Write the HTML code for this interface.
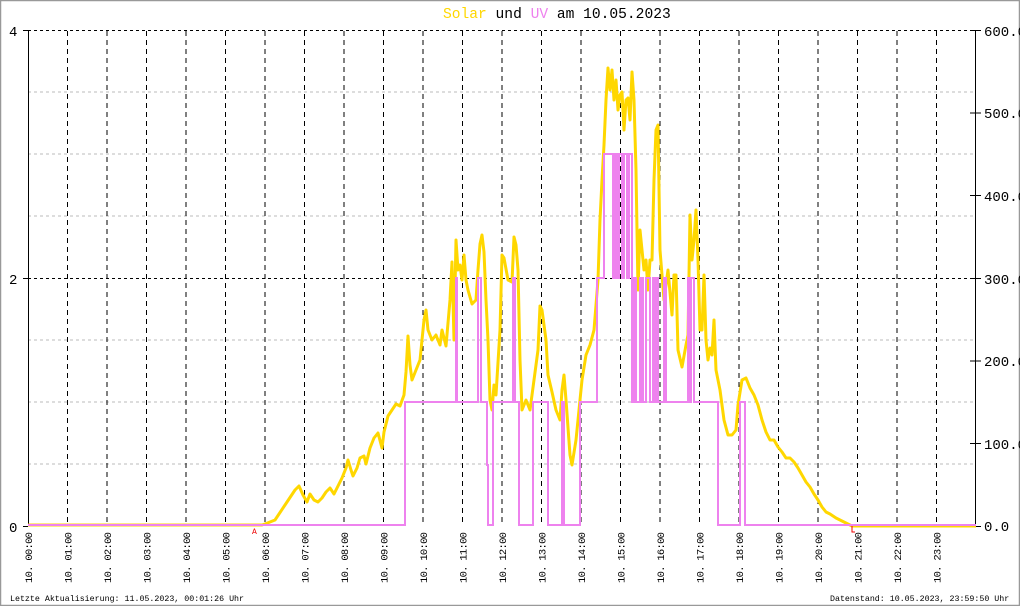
<!DOCTYPE html>
<html><head><meta charset="utf-8"><style>
html,body{margin:0;padding:0;background:#fff;}
svg{display:block;}
text{font-family:"Liberation Mono","DejaVu Sans Mono",monospace;}
</style></head><body>
<svg width="1020" height="606" viewBox="0 0 1020 606" xmlns="http://www.w3.org/2000/svg">
<rect x="0.5" y="0.5" width="1019" height="605" fill="#fff" stroke="#999" stroke-width="1.5"/>
<text x="443" y="18" font-size="14.6" fill="#000"><tspan fill="#ffd700">Solar</tspan> und <tspan fill="#ee82ee">UV</tspan> am 10.05.2023</text>
<g stroke="#bbb" stroke-width="1" stroke-dasharray="3,3">
<line x1="28" y1="92" x2="976" y2="92"/><line x1="28" y1="154" x2="976" y2="154"/><line x1="28" y1="216" x2="976" y2="216"/>
<line x1="28" y1="340" x2="976" y2="340"/><line x1="28" y1="402" x2="976" y2="402"/><line x1="28" y1="464" x2="976" y2="464"/>
</g>
<g stroke="#000" stroke-width="1" stroke-dasharray="3,3">
<line x1="28" y1="30.5" x2="976" y2="30.5"/><line x1="28" y1="278.5" x2="976" y2="278.5"/>
</g>
<g stroke="#000" stroke-width="1" stroke-dasharray="5,4">
<line x1="67.5" y1="31" x2="67.5" y2="526"/><line x1="107" y1="31" x2="107" y2="526"/><line x1="146.5" y1="31" x2="146.5" y2="526"/>
<line x1="186" y1="31" x2="186" y2="526"/><line x1="225.5" y1="31" x2="225.5" y2="526"/><line x1="265" y1="31" x2="265" y2="526"/>
<line x1="304.5" y1="31" x2="304.5" y2="526"/><line x1="344" y1="31" x2="344" y2="526"/><line x1="383.5" y1="31" x2="383.5" y2="526"/>
<line x1="423" y1="31" x2="423" y2="526"/><line x1="462.5" y1="31" x2="462.5" y2="526"/><line x1="502" y1="31" x2="502" y2="526"/>
<line x1="541.5" y1="31" x2="541.5" y2="526"/><line x1="581" y1="31" x2="581" y2="526"/><line x1="620.5" y1="31" x2="620.5" y2="526"/>
<line x1="660" y1="31" x2="660" y2="526"/><line x1="699.5" y1="31" x2="699.5" y2="526"/><line x1="739" y1="31" x2="739" y2="526"/>
<line x1="778.5" y1="31" x2="778.5" y2="526"/><line x1="818" y1="31" x2="818" y2="526"/><line x1="857.5" y1="31" x2="857.5" y2="526"/>
<line x1="897" y1="31" x2="897" y2="526"/><line x1="936.5" y1="31" x2="936.5" y2="526"/>
</g>
<g stroke="#000" stroke-width="1">
<line x1="28.5" y1="30" x2="28.5" y2="526"/><line x1="975.5" y1="30" x2="975.5" y2="526"/>
<line x1="23" y1="30.5" x2="28" y2="30.5"/><line x1="23" y1="278.5" x2="28" y2="278.5"/><line x1="23" y1="526.5" x2="28" y2="526.5"/>
<line x1="970" y1="30.5" x2="981" y2="30.5"/><line x1="970" y1="113" x2="981" y2="113"/><line x1="970" y1="195.5" x2="981" y2="195.5"/>
<line x1="970" y1="278.5" x2="981" y2="278.5"/><line x1="970" y1="361" x2="981" y2="361"/><line x1="970" y1="443.5" x2="981" y2="443.5"/>
<line x1="970" y1="526.5" x2="981" y2="526.5"/>
</g>
<g font-size="14" fill="#000">
<text x="9" y="36">4</text><text x="9" y="284">2</text><text x="9" y="532">0</text>
<text x="984" y="36">600.0</text><text x="984" y="118">500.0</text><text x="984" y="201">400.0</text>
<text x="984" y="284">300.0</text><text x="984" y="366">200.0</text><text x="984" y="449">100.0</text><text x="984" y="531">0.0</text>
</g>
<polyline fill="none" stroke="#ffd700" stroke-width="3" stroke-linejoin="round" points="28,525 262,525 265,524 275,520 285,505 295,490 299,486 303,495 307,502 310,494 314,500 318,502 322,498 326,492 330,488 334,494 338,486 342,478 346,468 348,460 351,470 353,476 357,468 360,458 364,456 366,464 370,448 374,438 378,433 382,448 384,432 388,416 392,410 396,404 400,406 404,395 406,372 408,336 410,365 412,380 416,370 420,360 424,320 426,310 428,330 432,340 436,335 440,345 442,330 446,346 450,300 452,262 454,340 456,240 458,270 460,265 462,280 464,255 466,280 468,290 472,304 476,300 478,270 480,244 482,235 484,252 486,300 488,340 490,400 492,410 494,385 496,395 500,330 502,255 504,258 508,280 512,282 514,237 516,245 518,270 520,360 522,410 526,400 530,410 534,380 538,350 540,306 542,310 546,340 548,375 552,392 556,410 560,420 562,390 564,375 566,400 570,455 572,465 576,440 580,400 582,380 586,355 590,345 594,330 596,305 598,280 600,220 602,180 604,145 606,100 608,68 610,90 612,70 614,100 616,80 618,110 620,95 622,92 624,130 626,100 628,98 630,120 632,72 634,100 636,170 638,290 640,230 642,250 644,270 646,260 648,290 650,260 652,260 654,180 656,130 658,125 660,250 664,300 668,270 672,315 674,275 676,275 678,350 682,367 686,345 688,335 690,215 692,260 694,240 696,210 698,260 700,330 702,330 704,275 706,340 708,360 710,348 712,355 714,320 716,370 718,380 720,390 724,420 728,435 732,435 736,430 738,405 742,380 746,378 750,388 754,395 758,405 762,420 766,432 770,440 774,440 778,447 782,452 786,458 790,458 794,462 798,468 802,475 806,482 810,487 814,494 818,500 822,507 826,512 830,514 836,518 842,521 848,524 852,526 976,526"/>
<path fill="none" stroke="#ee82ee" stroke-width="2" d="M28,525 H405 V402 H456 V278 H457 V402 H478 V278 H481 V402 H487 V465 H488 V525 H493 V402 H513 V278 H515 V402 H519 V465 V525 H533 V402 H548 V525 H562 V402 H564 V525 H580 V465 V402 H597 V278 H604 V154 H613 V278 H615 V154 H617 V278 H619 V154 H622 V278 H624 V154 H627 V278 H629 V154 H632 V402 H634 V278 H636 V402 H640 V278 H641 V402 H642 V278 H643 V402 H646 V278 H650 V402 H653 V278 H655 V402 H656 V278 H658 V402 H664 V278 H666 V402 H688 V278 H690 V402 H691 V278 H694 V402 H718 V465 V525 H740 V402 H745 V465 V525 H976"/>
<text x="252" y="534" font-size="8" fill="#e00">A</text>
<path d="M852,526 V532 H855" stroke="#e00" fill="none" stroke-width="1"/>
<g font-size="10.5" fill="#000">
<text transform="translate(32,583) rotate(-90)" textLength="51">10. 00:00</text>
<text transform="translate(71.5,583) rotate(-90)" textLength="51">10. 01:00</text>
<text transform="translate(111,583) rotate(-90)" textLength="51">10. 02:00</text>
<text transform="translate(150.5,583) rotate(-90)" textLength="51">10. 03:00</text>
<text transform="translate(190,583) rotate(-90)" textLength="51">10. 04:00</text>
<text transform="translate(229.5,583) rotate(-90)" textLength="51">10. 05:00</text>
<text transform="translate(269,583) rotate(-90)" textLength="51">10. 06:00</text>
<text transform="translate(308.5,583) rotate(-90)" textLength="51">10. 07:00</text>
<text transform="translate(348,583) rotate(-90)" textLength="51">10. 08:00</text>
<text transform="translate(387.5,583) rotate(-90)" textLength="51">10. 09:00</text>
<text transform="translate(427,583) rotate(-90)" textLength="51">10. 10:00</text>
<text transform="translate(466.5,583) rotate(-90)" textLength="51">10. 11:00</text>
<text transform="translate(506,583) rotate(-90)" textLength="51">10. 12:00</text>
<text transform="translate(545.5,583) rotate(-90)" textLength="51">10. 13:00</text>
<text transform="translate(585,583) rotate(-90)" textLength="51">10. 14:00</text>
<text transform="translate(624.5,583) rotate(-90)" textLength="51">10. 15:00</text>
<text transform="translate(664,583) rotate(-90)" textLength="51">10. 16:00</text>
<text transform="translate(703.5,583) rotate(-90)" textLength="51">10. 17:00</text>
<text transform="translate(743,583) rotate(-90)" textLength="51">10. 18:00</text>
<text transform="translate(782.5,583) rotate(-90)" textLength="51">10. 19:00</text>
<text transform="translate(822,583) rotate(-90)" textLength="51">10. 20:00</text>
<text transform="translate(861.5,583) rotate(-90)" textLength="51">10. 21:00</text>
<text transform="translate(901,583) rotate(-90)" textLength="51">10. 22:00</text>
<text transform="translate(940.5,583) rotate(-90)" textLength="51">10. 23:00</text>
</g>
<text x="10" y="601" font-size="8.3" fill="#000">Letzte Aktualisierung: 11.05.2023, 00:01:26 Uhr</text>
<text x="830" y="601" font-size="8.3" fill="#000">Datenstand: 10.05.2023, 23:59:50 Uhr</text>
</svg>
</body></html>
